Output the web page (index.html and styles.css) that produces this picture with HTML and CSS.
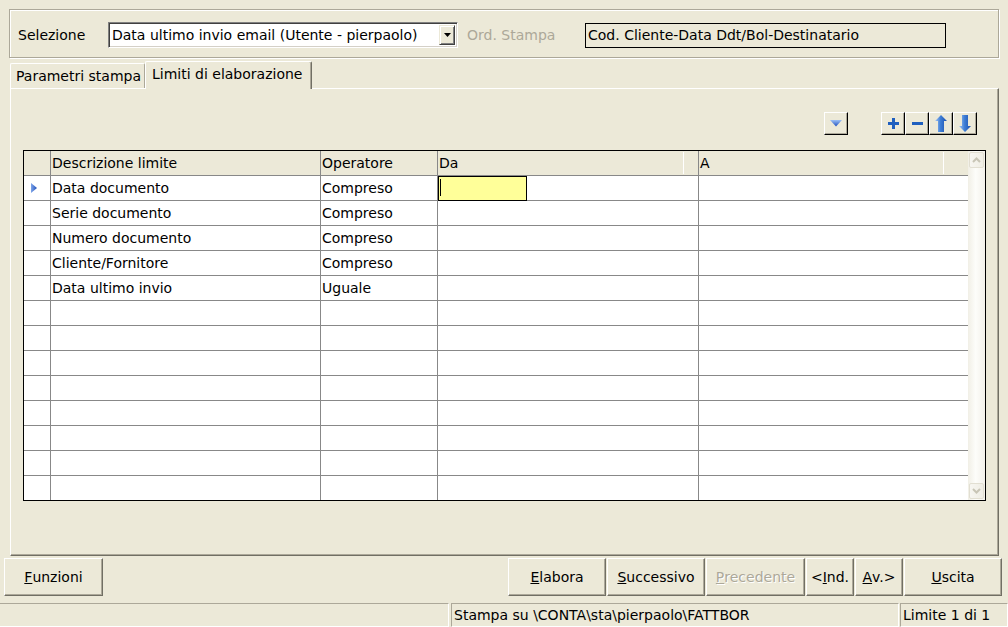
FILE: index.html
```html
<!DOCTYPE html>
<html>
<head>
<meta charset="utf-8">
<link rel="stylesheet" href="styles.css">
</head>
<body>
<div class="app">
  <div class="selbox">
    <span class="sel-lbl">Selezione</span>
    <div class="combo">
      <span class="combo-text">Data ultimo invio email (Utente - pierpaolo)</span>
      <span class="combo-btn"><svg width="7" height="4" viewBox="0 0 7 4"><polygon points="0,0 7,0 3.5,4" fill="#000"/></svg></span>
    </div>
    <span class="ord-lbl">Ord. Stampa</span>
    <div class="ordbox">Cod. Cliente-Data Ddt/Bol-Destinatario</div>
  </div>

  <div class="tabs">
    <div class="tab tab1">Parametri stampa</div>
    <div class="tab tab2">Limiti di elaborazione</div>
  </div>

  <div class="panel">
    <div class="toolbar">
      <div class="tbtn"><svg width="12" height="7" viewBox="0 0 12 7"><defs><linearGradient id="gd" x1="0" y1="0" x2="0" y2="1"><stop offset="0" stop-color="#9cc0f6"/><stop offset="1" stop-color="#1d4fbf"/></linearGradient></defs><polygon points="0,0 12,0 6,6.5" fill="url(#gd)"/></svg></div>
      <div class="tgroup">
        <div class="tbtn"><svg width="11" height="11" viewBox="0 0 11 11"><rect x="4" y="0" width="3" height="11" fill="#1f5fbf"/><rect x="0" y="4" width="11" height="3" fill="#1f5fbf"/></svg></div>
        <div class="tbtn"><svg width="11" height="3" viewBox="0 0 11 3"><rect x="0" y="0" width="11" height="3" fill="#1f5fbf"/></svg></div>
        <div class="tbtn"><svg width="12" height="17" viewBox="0 0 12 17"><defs><linearGradient id="ga" x1="0" y1="0" x2="1" y2="0"><stop offset="0" stop-color="#a9c8f4"/><stop offset="0.45" stop-color="#3f7fd6"/><stop offset="1" stop-color="#1a4fae"/></linearGradient></defs><polygon points="6,0 12,6 9,6 9,17 3,17 3,6 0,6" fill="url(#ga)"/></svg></div>
        <div class="tbtn"><svg width="12" height="17" viewBox="0 0 12 17"><polygon points="3,0 9,0 9,11 12,11 6,17 0,11 3,11" fill="url(#ga)"/></svg></div>
      </div>
    </div>

    <div class="grid">
      <div class="table">
        <div class="c h"></div><div class="c h">Descrizione limite</div><div class="c h">Operatore</div><div class="c h hl1">Da</div><div class="c h last hl2">A</div>

        <div class="c ind"><svg width="6" height="10" viewBox="0 0 6 10"><defs><linearGradient id="gi" x1="0" y1="0" x2="1" y2="0"><stop offset="0" stop-color="#7fa6ea"/><stop offset="1" stop-color="#1f4fb8"/></linearGradient></defs><polygon points="0,0 6,5 0,10" fill="url(#gi)"/></svg></div><div class="c">Data documento</div><div class="c">Compreso</div><div class="c ed"><div class="editor"><span class="caret"></span></div></div><div class="c last"></div>

        <div class="c"></div><div class="c">Serie documento</div><div class="c">Compreso</div><div class="c"></div><div class="c last"></div>
        <div class="c"></div><div class="c">Numero documento</div><div class="c">Compreso</div><div class="c"></div><div class="c last"></div>
        <div class="c"></div><div class="c">Cliente/Fornitore</div><div class="c">Compreso</div><div class="c"></div><div class="c last"></div>
        <div class="c"></div><div class="c">Data ultimo invio</div><div class="c">Uguale</div><div class="c"></div><div class="c last"></div>
        <div class="c"></div><div class="c"></div><div class="c"></div><div class="c"></div><div class="c last"></div>
        <div class="c"></div><div class="c"></div><div class="c"></div><div class="c"></div><div class="c last"></div>
        <div class="c"></div><div class="c"></div><div class="c"></div><div class="c"></div><div class="c last"></div>
        <div class="c"></div><div class="c"></div><div class="c"></div><div class="c"></div><div class="c last"></div>
        <div class="c"></div><div class="c"></div><div class="c"></div><div class="c"></div><div class="c last"></div>
        <div class="c"></div><div class="c"></div><div class="c"></div><div class="c"></div><div class="c last"></div>
        <div class="c"></div><div class="c"></div><div class="c"></div><div class="c"></div><div class="c last"></div>
        <div class="c b"></div><div class="c b"></div><div class="c b"></div><div class="c b"></div><div class="c b last"></div>
      </div>
      <div class="vscroll">
        <div class="sbtn"><svg width="9" height="6" viewBox="0 0 9 6"><polyline points="1,5 4.5,1.5 8,5" fill="none" stroke="#c8c5b6" stroke-width="2"/></svg></div>
        <div class="strack"></div>
        <div class="sbtn"><svg width="9" height="6" viewBox="0 0 9 6"><polyline points="1,1 4.5,4.5 8,1" fill="none" stroke="#c8c5b6" stroke-width="2"/></svg></div>
      </div>
    </div>
  </div>

  <div class="btnrow">
    <div class="btn w-funz"><u>F</u>unzioni</div>
    <div class="btngroup">
      <div class="btn w-elab"><u>E</u>labora</div>
      <div class="btn w-succ"><u>S</u>uccessivo</div>
      <div class="btn w-prec dis"><u>P</u>recedente</div>
      <div class="btn w-ind">&lt;<u>I</u>nd.</div>
      <div class="btn w-av"><u>A</u>v.&gt;</div>
      <div class="btn w-usc"><u>U</u>scita</div>
    </div>
  </div>

  <div class="status">
    <div class="sp sp1"></div>
    <div class="sp sp2">Stampa su \CONTA\sta\pierpaolo\FATTBOR</div>
    <div class="sp sp3">Limite 1 di 1</div>
  </div>
</div>
</body>
</html>
```

FILE: styles.css
```css
* { box-sizing: border-box; }
html, body { margin: 0; padding: 0; }
body {
  background: #ECE9D8;
  font-family: "DejaVu Sans", Tahoma, sans-serif;
  font-size: 14px;
  color: #000;
  width: 1008px;
  height: 627px;
  overflow: hidden;
}
.app { display: flex; flex-direction: column; height: 627px; }

/* selection group box */
.selbox {
  margin: 9px 9px 0 9px;
  height: 49px;
  border: 1px solid #ACA899;
  box-shadow: inset 1px 1px 0 #fff, 1px 1px 0 #fff;
  display: flex;
  align-items: center;
  padding: 12px 0 9px 8px;
}
.sel-lbl { width: 90px; white-space: nowrap; }
.combo {
  width: 350px;
  height: 26px;
  background: #fff;
  border: 1px solid;
  border-color: #808080 #fff #fff #808080;
  box-shadow: inset 1px 1px 0 #404040, inset -1px -1px 0 #D4D0C8;
  display: flex;
  align-items: center;
  padding: 1px 2px 1px 2px;
}
.combo-text { flex: 1; padding-left: 1px; white-space: nowrap; line-height: 20px; }
.combo-btn {
  width: 16px;
  height: 20px;
  background: #ECE9D8;
  border: 1px solid;
  border-color: #ECE9D8 #404040 #404040 #ECE9D8;
  box-shadow: inset 1px 1px 0 #fff, inset -1px -1px 0 #808080;
  display: flex;
  align-items: center;
  justify-content: center;
}
.ord-lbl { margin-left: 9px; width: 118px; color: #ACA899; white-space: nowrap; }
.ordbox {
  width: 361px;
  height: 25px;
  border: 1px solid #000;
  padding-left: 2px;
  line-height: 22px;
  white-space: nowrap;
}

/* tabs */
.tabs {
  display: flex;
  align-items: flex-end;
  margin-top: 3px;
  padding-left: 10px;
  height: 27px;
}
.tab { white-space: nowrap; background: #ECE9D8; }
.tab1 {
  width: 135px;
  height: 25px;
  border-top: 1px solid #fff;
  border-left: 1px solid #fff;
  border-right: 1px solid #ACA899;
  border-radius: 2px 2px 0 0;
  padding-left: 5px;
  line-height: 24px;
}
.tab2 {
  width: 167px;
  height: 28px;
  margin-bottom: -1px;
  position: relative;
  z-index: 1;
  border-top: 1px solid #fff;
  border-left: 1px solid #fff;
  border-right: 1px solid #716F64;
  box-shadow: inset -1px 0 0 #ACA899;
  border-radius: 2px 2px 0 0;
  padding-left: 6px;
  line-height: 24px;
}

/* panel */
.panel {
  margin: 0 9px 0 10px;
  height: 468px;
  border-top: 1px solid #fff;
  border-left: 1px solid #fff;
  border-right: 1px solid #716F64;
  border-bottom: 1px solid #716F64;
  box-shadow: inset -1px -1px 0 #ACA899;
  padding: 23px 12px 0 12px;
}
.toolbar {
  display: flex;
  justify-content: flex-end;
  padding-right: 9px;
  height: 23px;
}
.tgroup { display: flex; margin-left: 33px; }
.tbtn {
  width: 24px;
  height: 23px;
  border: 1px solid;
  border-color: #fff #000 #000 #fff;
  box-shadow: inset -1px -1px 0 #ACA899;
  display: flex;
  align-items: center;
  justify-content: center;
}

.grid {
  margin-top: 15px;
  height: 351px;
  border: 1px solid #000;
  display: flex;
}
.table {
  width: 944px;
  display: grid;
  grid-template-columns: 27px 270px 117px 261px 269px;
  grid-template-rows: repeat(13, 25px) 24px;
}
.c {
  background: #fff;
  border-right: 1px solid #888;
  border-bottom: 1px solid #888;
  padding-left: 1px;
  line-height: 24px;
  white-space: nowrap;
  overflow: visible;
}
.c.last { border-right: none; }
.c.b { border-bottom: none; }
.c.h { background: #ECE9D8; position: relative; }
.hl1::after, .hl2::after {
  content: "";
  position: absolute;
  top: 1px;
  bottom: 1px;
  width: 1px;
  background: #fff;
}
.hl1::after { right: 14px; }
.hl2::after { right: 24px; }
.ind { display: flex; align-items: center; padding-left: 7px; }
.ed { padding-left: 0; }
.editor {
  width: 89px;
  height: 25px;
  background: #FFFF99;
  border: 1px solid #000;
}
.caret { display: block; width: 1px; height: 17px; background: #000; margin: 2px 0 0 1px; }

.vscroll {
  width: 17px;
  display: flex;
  flex-direction: column;
  padding: 1px;
  background: linear-gradient(to right, #F1EFE6, #FDFDFA 45%, #F3F1EA);
}
.sbtn {
  height: 16px;
  border: 1px solid #E2DFD2;
  border-radius: 2px;
  background: linear-gradient(to right, #F7F6F1, #EFEDE4);
  display: flex;
  align-items: center;
  justify-content: center;
}
.strack { flex: 1; }

/* buttons */
.btnrow {
  margin-top: 2px;
  height: 38px;
  display: flex;
  justify-content: space-between;
  padding: 0 6px 0 4px;
}
.btngroup { display: flex; gap: 1px; }
.btn {
  height: 38px;
  border: 1px solid;
  border-color: #fff #716F64 #716F64 #fff;
  box-shadow: inset -1px -1px 0 #ACA899;
  display: flex;
  align-items: center;
  justify-content: center;
  white-space: nowrap;
}
.btn.dis { color: #ACA899; text-shadow: 1px 1px 0 #fff; }
.w-funz { width: 99px; }
.w-elab { width: 98px; }
.w-succ { width: 98px; }
.w-prec { width: 99px; }
.w-ind { width: 48px; }
.w-av { width: 48px; }
.w-usc { width: 98px; }

/* status bar */
.status {
  margin-top: 7px;
  height: 24px;
  display: flex;
}
.sp {
  height: 24px;
  border-top: 1px solid #ACA899;
  border-left: 1px solid #ACA899;
  border-right: 1px solid #fff;
  border-bottom: 1px solid #fff;
  padding-left: 2px;
  line-height: 22px;
  white-space: nowrap;
}
.sp1 { width: 449px; border-left: none; }
.sp2 { width: 448px; margin-left: 2px; }
.sp3 { width: 108px; margin-left: 1px; }
```
